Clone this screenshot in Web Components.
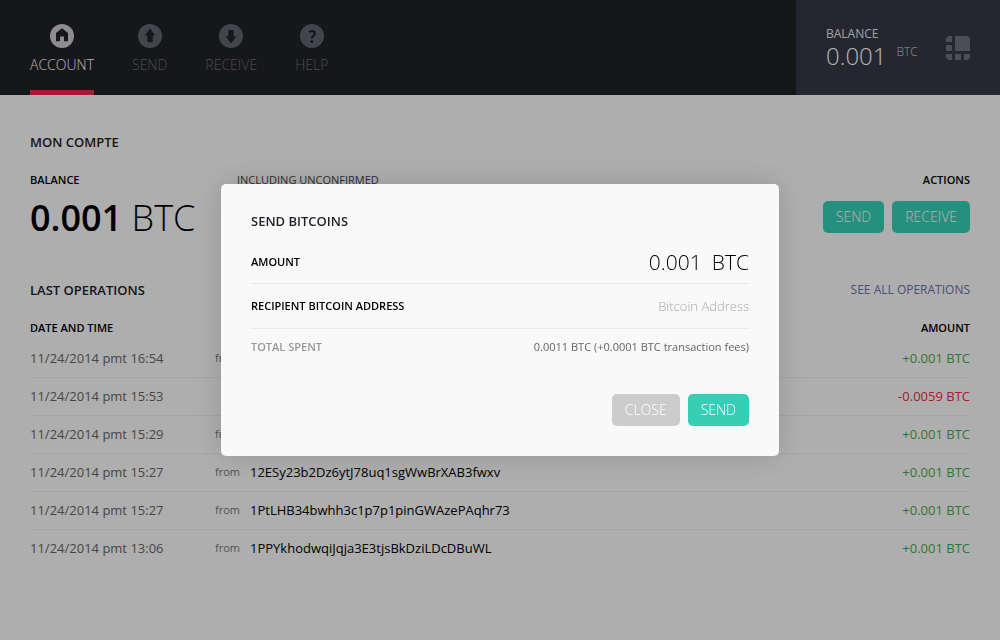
<!DOCTYPE html>
<html lang="en">
<head>
<meta charset="utf-8">
<meta name="viewport" content="width=device-width, initial-scale=1">
<title>Wallet</title>
<style>
  body {
    margin: 0;
    min-height: 100vh;
    background: #f9f9f9;
    color: #000;
    font-family: "Open Sans", "Noto Sans", sans-serif;
    font-size: 13px;
    line-height: 20px;
  }
</style>
</head>
<body>
<wallet-header>
  <nav-item icon="home" active>ACCOUNT</nav-item>
  <nav-item icon="up">SEND</nav-item>
  <nav-item icon="down">RECEIVE</nav-item>
  <nav-item icon="help">HELP</nav-item>
  <header-balance slot="balance" amount="0.001"></header-balance>
</wallet-header>
<wallet-account></wallet-account>
<send-dialog></send-dialog>

<script>
class BaseElement extends HTMLElement {
  connectedCallback() {
    if (this.shadowRoot) return;
    this.attachShadow({ mode: "open" }).innerHTML = this.render();
  }
}

const glyphs = {
  home: '<path d="M12 4.200 18 9v8.300h-4V12.500h-4v4.800H6V9z"/>',
  up: '<path d="M12 4.300 17.200 11.400h-2.500V18.300H9.300v-6.900H6.800z"/>',
  down: '<path d="M12 19.400 17.200 12.400h-2.500V5.900H9.300v6.500H6.800z"/>',
  help: '<path d="M9 8.200C10.600 7 14.800 6.300 14.800 9.400c0 2.300-2.900 2.200-2.900 5" fill="none" stroke="#1f2128" stroke-width="2.300"/><circle cx="11.800" cy="17.500" r="1.500"/>'
};

customElements.define("wallet-header", class extends BaseElement {
  render() {
    return `
      <style>
        :host { display: block; background: #1f2128; }
        header { display: flex; justify-content: space-between; height: 95px; }
        nav { display: flex; gap: 38px; padding-left: 30px; }
      </style>
      <header><nav><slot></slot></nav><slot name="balance"></slot></header>`;
  }
});

customElements.define("nav-item", class extends BaseElement {
  render() {
    return `
      <style>
        :host { display: flex; color: #6c6e74; }
        :host([active]) { color: #fff; }
        a { display: flex; flex-direction: column; align-items: center; box-sizing: border-box;
            padding-top: 24px; color: inherit; text-decoration: none;
            font-weight: 300; font-size: 14px; border-bottom: 5px solid transparent; }
        :host([active]) a { border-bottom-color: #ec2845; }
        svg { display: block; margin-bottom: 7px; fill: #1f2128; }
        .disc { fill: #62646a; }
        :host([active]) .disc { fill: #cbcbcd; }
      </style>
      <a href="#${this.getAttribute("icon")}">
        <svg width="24" height="24" viewBox="0 0 24 24" aria-hidden="true">
          <circle class="disc" cx="12" cy="12" r="12"/>${glyphs[this.getAttribute("icon")]}
        </svg>
        <slot></slot>
      </a>`;
  }
});

customElements.define("header-balance", class extends BaseElement {
  render() {
    return `
      <style>
        :host { display: flex; align-items: center; justify-content: space-between; box-sizing: border-box;
                width: 204px; padding: 0 30px; background: #343745; color: #fff; font-weight: 300; }
        .label { font-size: 12px; line-height: 16px; font-weight: 400; color: #e4e4e6; }
        .value { display: flex; gap: 10px; font-size: 24px; line-height: 28px; }
        .unit { font-size: 12px; line-height: 20px; color: #cfd0d6; }
        svg { display: block; fill: #6d707c; }
      </style>
      <div>
        <div class="label">BALANCE</div>
        <div class="value"><span>${this.getAttribute("amount")}</span><span class="unit">BTC</span></div>
      </div>
      <svg width="24" height="24" viewBox="0 0 24 24" aria-hidden="true">
        <path d="M4 0h2v6H0V4a4 4 0 0 1 4-4zM9 0h11a4 4 0 0 1 4 4v11H9zM0 9h6v6H0zM0 18h6v6H4a4 4 0 0 1-4-4zM9 18h6v6H9zM18 18h6v2a4 4 0 0 1-4 4h-2z"/>
      </svg>`;
  }
});

customElements.define("flat-button", class extends BaseElement {
  render() {
    return `
      <style>
        :host { display: block; --fill: #37ceb6; }
        :host([muted]) { --fill: #ccc; }
        button { display: block; height: 32px; padding: 0 13px; border: 0; border-radius: 5px;
                 background: var(--fill); color: #fff; font: inherit; font-weight: 300; font-size: 14px; }
      </style>
      <button type="button"><slot></slot></button>`;
  }
});

customElements.define("wallet-account", class extends BaseElement {
  render() {
    return `
      <style>
        :host { display: block; padding: 37px 30px 30px; }
        h1, h2, h3 { margin: 0; font-weight: 600; }
        h1, h2 { font-size: 13px; line-height: 20px; color: #1f2128; }
        h3 { font-size: 11px; line-height: 16px; }
        .summary { display: grid; grid-template-columns: 207px 1fr auto; margin-top: 20px; }
        .soft { font-weight: 400; color: #444; }
        .total { margin-top: 10px; font-size: 36px; line-height: 40px; font-weight: 300; white-space: nowrap; }
        .total b { font-weight: 600; }
        .actions { text-align: right; }
        .buttons { display: flex; gap: 8px; margin-top: 13px; }
        .bar { display: flex; justify-content: space-between; margin-top: 42px; }
        a { color: #6574a6; text-decoration: none; font-size: 12px; }
      </style>
      <main>
        <h1>MON COMPTE</h1>
        <div class="summary">
          <div><h3>BALANCE</h3><div class="total"><b>0.001</b> BTC</div></div>
          <h3 class="soft">INCLUDING UNCONFIRMED</h3>
          <div class="actions">
            <h3>ACTIONS</h3>
            <div class="buttons"><flat-button>SEND</flat-button><flat-button>RECEIVE</flat-button></div>
          </div>
        </div>
        <div class="bar"><h2>LAST OPERATIONS</h2><a href="#operations">SEE ALL OPERATIONS</a></div>
        <operation-list></operation-list>
      </main>`;
  }
});

const operations = [
  ["11/24/2014 pmt 16:54", "from", "", "+0.001 BTC"],
  ["11/24/2014 pmt 15:53", "", "", "-0.0059 BTC"],
  ["11/24/2014 pmt 15:29", "from", "", "+0.001 BTC"],
  ["11/24/2014 pmt 15:27", "from", "12ESy23b2Dz6ytJ78uq1sgWwBrXAB3fwxv", "+0.001 BTC"],
  ["11/24/2014 pmt 15:27", "from", "1PtLHB34bwhh3c1p7p1pinGWAzePAqhr73", "+0.001 BTC"],
  ["11/24/2014 pmt 13:06", "from", "1PPYkhodwqiJqja3E3tjsBkDziLDcDBuWL", "+0.001 BTC"]
];

customElements.define("operation-list", class extends BaseElement {
  render() {
    const rows = operations.map(([date, way, address, amount]) => `
      <tr>
        <td class="date">${date}</td>
        <td class="way">${way}</td>
        <td>${address}</td>
        <td class="amount ${amount[0] === "-" ? "out" : "in"}">${amount}</td>
      </tr>`).join("");
    return `
      <style>
        :host { display: block; margin-top: 16px; }
        table { width: 100%; table-layout: fixed; border-collapse: separate; border-spacing: 0; }
        th, td { padding: 0; text-align: left; white-space: nowrap; }
        th { height: 24px; font-size: 11px; line-height: 16px; font-weight: 600; }
        td { height: 35px; padding-bottom: 2px; border-bottom: 1px solid #ebebeb; }
        tr:last-child td { border-bottom-color: transparent; }
        .c1 { width: 185px; }
        .c2 { width: 35px; }
        .c4 { width: 120px; }
        .date { color: #666; }
        .way { color: #777; font-size: 11px; }
        .amount { text-align: right; }
        .in { color: #3fae50; }
        .out { color: #ec2845; }
      </style>
      <table>
        <colgroup><col class="c1"><col class="c2"><col><col class="c4"></colgroup>
        <thead><tr><th colspan="3">DATE AND TIME</th><th class="amount">AMOUNT</th></tr></thead>
        <tbody>${rows}</tbody>
      </table>`;
  }
});

customElements.define("send-dialog", class extends BaseElement {
  render() {
    return `
      <style>
        :host { position: fixed; inset: 0; display: flex; align-items: center; justify-content: center;
                background: rgba(0, 0, 0, .3); }
        section { box-sizing: border-box; width: 100%; max-width: 558px; padding: 27px 30px 30px;
                  border-radius: 5px; background: #f9f9f9; box-shadow: 0 0 30px rgba(0, 0, 0, .15); }
        h2 { margin: 0 0 10px; font-size: 13px; line-height: 20px; font-weight: 600; color: #1f2128; }
        .row { display: flex; align-items: center; justify-content: space-between; height: 44px;
               border-bottom: 1px solid #ebebeb; font-size: 11px; }
        .row.first { height: 42px; }
        .row.last { height: 36px; border: 0; color: #666; }
        label { font-weight: 600; }
        .last span:first-child { color: #999; font-weight: 600; }
        input { min-width: 0; padding: 0; border: 0; outline: 0; background: none; color: #000;
                font: inherit; text-align: right; }
        .amount { display: flex; align-items: center; gap: 10px; font-size: 21px; line-height: 28px; font-weight: 300; }
        #amount { width: 120px; }
        #address { width: 260px; font-size: 13px; font-weight: 300; }
        #address::placeholder { color: #aaa; opacity: 1; }
        .buttons { display: flex; justify-content: flex-end; gap: 8px; margin-top: 29px; }
      </style>
      <section role="dialog" aria-modal="true" aria-labelledby="title">
        <h2 id="title">SEND BITCOINS</h2>
        <div class="row first"><label for="amount">AMOUNT</label>
          <div class="amount"><input id="amount" type="text" value="0.001"><span>BTC</span></div></div>
        <div class="row"><label for="address">RECIPIENT BITCOIN ADDRESS</label>
          <input id="address" type="text" placeholder="Bitcoin Address"></div>
        <div class="row last"><span>TOTAL SPENT</span><span>0.0011 BTC (+0.0001 BTC transaction fees)</span></div>
        <div class="buttons"><flat-button muted>CLOSE</flat-button><flat-button>SEND</flat-button></div>
      </section>`;
  }
});
</script>
</body>
</html>
